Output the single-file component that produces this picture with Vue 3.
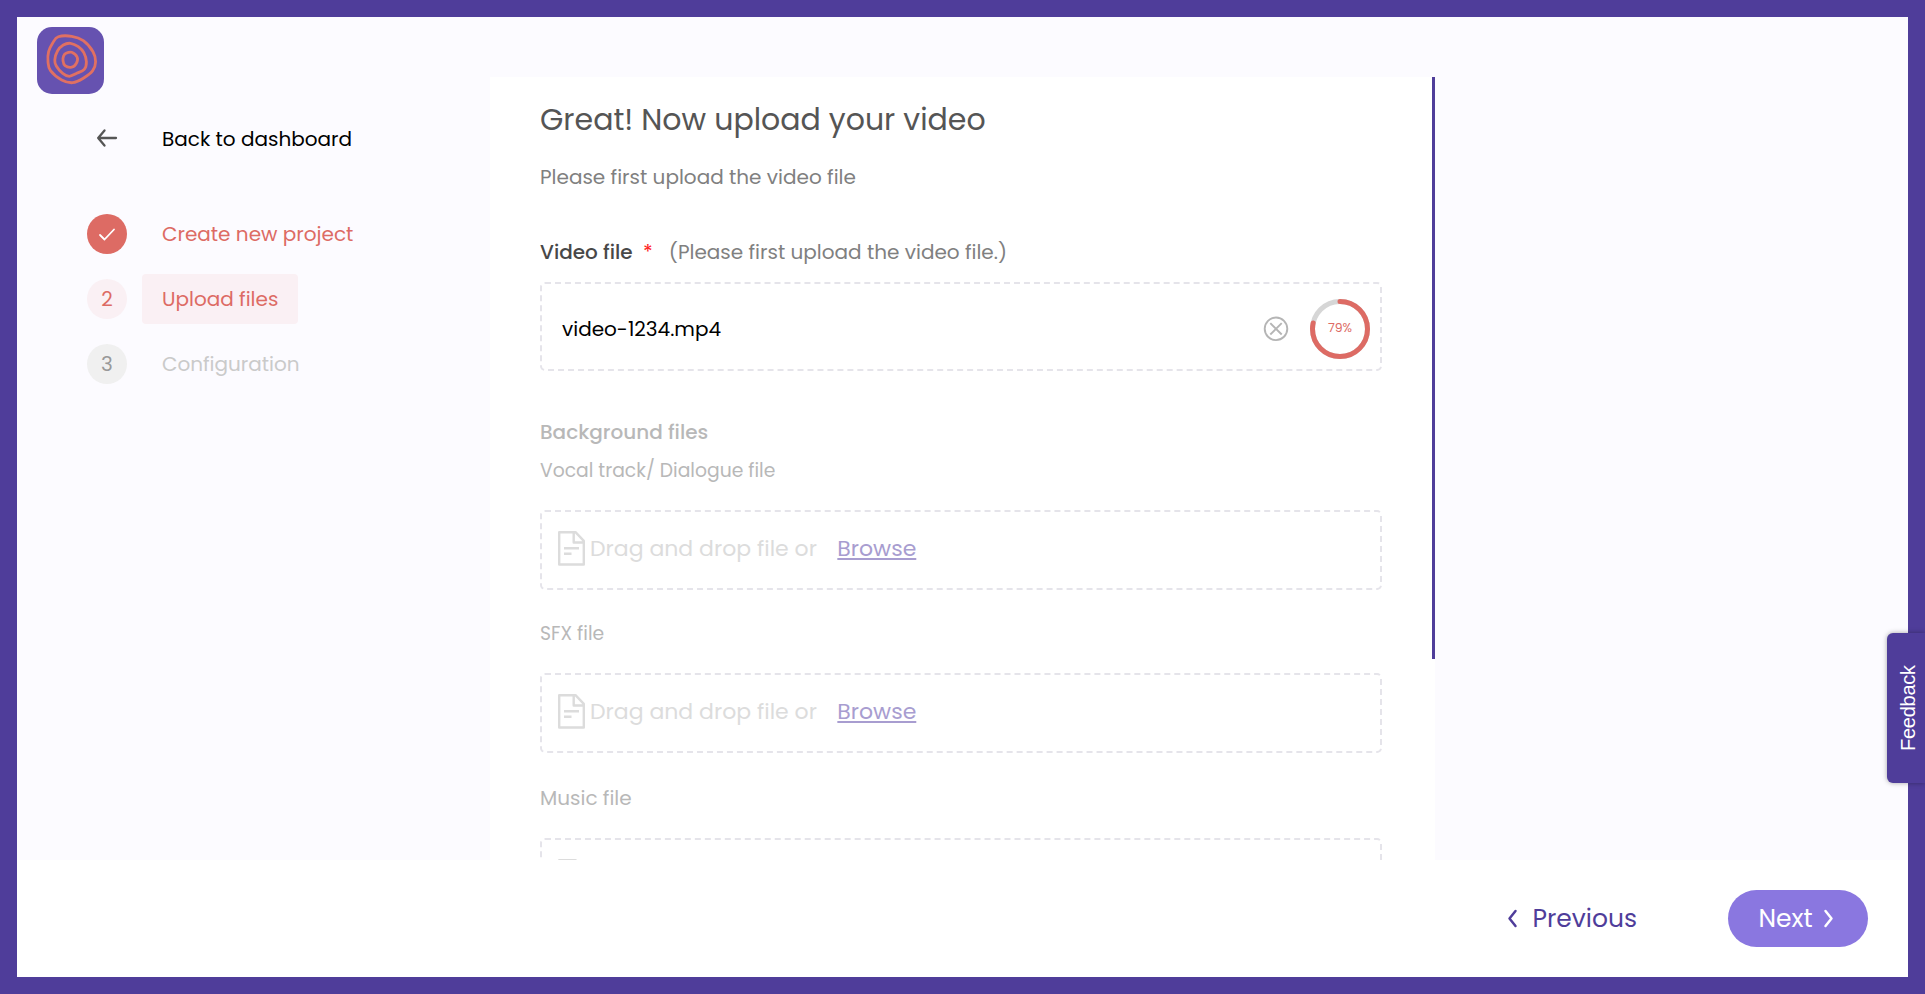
<script setup>
const steps = [
  { label: 'Create new project', state: 'done' },
  { label: 'Upload files', state: 'active' },
  { label: 'Configuration', state: 'idle' },
]
const tracks = [
  { label: 'Vocal track/ Dialogue file', key: 'vocal' },
  { label: 'SFX file', key: 'sfx' },
  { label: 'Music file', key: 'music' },
]
const progress = 79
const circumference = 2 * Math.PI * 27.5

// Closed smooth curve through a list of points (Catmull-Rom as cubic Béziers)
function smooth(p) {
  const n = p.length
  const at = (i) => p[(i + n) % n]
  let d = `M${at(0)}`
  for (let i = 0; i < n; i++) {
    const [a, b, c, e] = [at(i - 1), at(i), at(i + 1), at(i + 2)]
    d += `C${b[0] + (c[0] - a[0]) / 6} ${b[1] + (c[1] - a[1]) / 6} ${c[0] - (e[0] - b[0]) / 6} ${c[1] - (e[1] - b[1]) / 6} ${c[0]} ${c[1]}`
  }
  return d + 'Z'
}
const rings = [
  [[21.3, 9.8], [34.7, 9.3], [46.3, 13.7], [56, 24.7], [58.6, 34.7], [55.7, 43.7], [46.3, 51.3], [35.7, 55.7], [24.7, 53], [13.5, 43.7], [11, 34.7], [11.6, 24.7], [15.7, 16]],
  [[26.3, 18], [33.5, 16.3], [41.3, 19.7], [46.8, 25.7], [49.4, 34.7], [47.3, 42.3], [39.7, 46.3], [32.3, 49.3], [25.7, 46.3], [19.3, 39], [17.8, 32.8], [20.5, 24]],
  [[29, 26.3], [34.7, 25.3], [40.2, 30.3], [39.4, 36.2], [34.7, 40.2], [28, 38.7], [26, 33.7], [26.6, 29]],
].map(smooth)
</script>

<template>
  <div class="app">
    <main class="main">
      <aside class="sidebar">
        <div class="logo">
          <svg width="67" height="67" viewBox="0 0 67 67" fill="none" stroke="#e07062" stroke-width="2.8">
            <path v-for="(d, i) in rings" :key="i" :d="d" />
          </svg>
        </div>
        <div class="back">
          <svg class="arrow" width="22" height="20" viewBox="0 0 22 20" fill="none" stroke="#555" stroke-width="2.3" stroke-linecap="round" stroke-linejoin="round">
            <path d="M20 10H2.200M8.500 2.500L2.200 10L8.500 17.500" />
          </svg>
          <span class="back-text">Back to dashboard</span>
        </div>
        <ul class="steps">
          <li v-for="(s, i) in steps" :key="i" class="step" :class="s.state">
            <span class="dot">
              <svg v-if="s.state === 'done'" width="18" height="14" viewBox="0 0 18 14" fill="none" stroke="#fff" stroke-width="1.8" stroke-linecap="round" stroke-linejoin="round"><path d="M2 8L6.500 12.500L16 2.500" /></svg>
              <template v-else>{{ i + 1 }}</template>
            </span>
            <span class="step-label">{{ s.label }}</span>
          </li>
        </ul>
      </aside>

      <section class="panel">
        <div class="content">
          <h1>Great! Now upload your video</h1>
          <p class="sub">Please first upload the video file</p>
          <div class="label-row"><b>Video file</b><i>*</i><span>(Please first upload the video file.)</span></div>
          <div class="drop uploading">
            <span>video-1234.mp4</span>
            <svg class="cancel" width="26" height="26" viewBox="0 0 26 26" fill="none" stroke="#b5b5b5" stroke-width="1.9"><circle cx="13" cy="12.8" r="11.3" /><path d="M7.300 7.100L18.700 18.500M18.700 7.100L7.300 18.500" /></svg>
            <svg class="ring" width="60" height="60" viewBox="0 0 60 60" fill="none" stroke-width="5">
              <circle cx="30" cy="30" r="27.5" stroke="#d6d6d6" />
              <circle cx="30" cy="30" r="27.5" stroke="#dd6b64" stroke-linecap="round" transform="rotate(-90 30 30)" :stroke-dasharray="`${circumference * progress / 100 - 1} ${circumference}`" />
              <text x="30" y="33" text-anchor="middle">{{ progress }}%</text>
            </svg>
          </div>
          <h2>Background files</h2>
          <div v-for="t in tracks" :key="t.key" class="track" :class="t.key">
            <div class="track-label">{{ t.label }}</div>
            <div class="drop">
              <svg class="file" width="27" height="35" viewBox="0 0 27 35" fill="none" stroke="#dcdcdc" stroke-width="2.4" stroke-linejoin="round"><path d="M1.200 1.200H17.500L25.800 9.800V33.500H1.200ZM15.700 1.500V11.500H25.500M6 17.300H21M6 22.700H13.500" /></svg>
              <template v-if="t.key !== 'music'">
                <span class="drag">Drag and drop file or</span>
                <a class="browse">Browse</a>
              </template>
            </div>
          </div>
        </div>
        <div class="scrollbar"></div>
      </section>
    </main>

    <footer class="footer">
      <button class="prev">
        <svg width="11" height="19" viewBox="0 0 11 19" fill="none" stroke="#4f3d9a" stroke-width="2.5" stroke-linecap="round" stroke-linejoin="round"><path d="M8.500 2L2.500 9.500L8.500 17" /></svg>
        <span>Previous</span>
      </button>
      <button class="next">
        <span>Next</span>
        <svg width="11" height="19" viewBox="0 0 11 19" fill="none" stroke="#fff" stroke-width="2.5" stroke-linecap="round" stroke-linejoin="round"><path d="M2.500 2L8.500 9.500L2.500 17" /></svg>
      </button>
    </footer>
    <div class="feedback">Feedback</div>
  </div>
</template>

<style>
body { overflow: hidden; }
</style>
<style scoped>
.app { position: relative; box-sizing: border-box; height: 994px; border: 17px solid #4f3d9a; background: #fcfbff; display: flex; flex-direction: column; font-family: Poppins, Inter, sans-serif; font-size: 20px; line-height: 30px; color: #000; }
.main { display: flex; height: 843px; overflow: hidden; }
.sidebar { width: 473px; }
.logo { width: 67px; height: 67px; margin: 10px 0 0 20px; background: #6652b0; border-radius: 15px; overflow: hidden; }
.logo svg { display: block; }
.back { display: flex; align-items: center; margin: 30px 0 0 79px; height: 30px; }
.arrow { margin-top: -2px; }
.back-text { margin-left: 44px; }
.steps { list-style: none; margin: 55px 0 0 70px; padding: 0; display: flex; flex-direction: column; gap: 15px; }
.step { display: flex; align-items: center; height: 50px; color: #dd6b64; }
.dot { width: 40px; height: 40px; border-radius: 50%; background: #faf0f4; display: flex; align-items: center; justify-content: center; }
.done .dot { background: #dd6b64; }
.idle .dot { background: #f0f0f0; color: #999; }
.idle { color: #cacaca; }
.step-label { margin-left: 15px; padding: 10px 20px; border-radius: 4px; }
.active .step-label { background: #faf0f4; }
.panel { width: 945px; margin-top: 60px; background: #fff; display: flex; height: 783px; }
.content { width: 842px; padding: 21px 50px 0; }
h1 { margin: 0; font-size: 30px; font-weight: 400; line-height: 43px; color: #555; }
.sub { margin: 21px 0 0; color: #808080; }
.label-row { margin: 45px 0 15px; display: flex; color: #808080; }
.label-row b { font-weight: 500; color: #484848; }
.label-row i { font-style: normal; color: #f22; margin: 0 16px 0 10.5px; }
.drop { box-sizing: border-box; width: 842px; height: 80px; border: 2px dashed #e5e4ea; border-radius: 5px; display: flex; align-items: center; color: #dcdcdc; font-size: 22px; line-height: 31px; }
.uploading { height: 89px; color: #000; font-size: 20px; line-height: 30px; padding: 5px 10px 0 20px; }
.cancel { margin-left: auto; margin-right: 21px; }
.ring text { fill: #dd6b64; font-size: 12.5px; }
h2 { margin: 46px 0 8px; font-size: 20px; font-weight: 500; line-height: 30px; color: #b8b8b8; }
.track { margin-bottom: 28px; }
.track-label { color: #b8b8b8; font-size: 18.75px; line-height: 31px; margin-bottom: 24px; }
.sfx { margin-bottom: 30px; }
.music .track-label { font-size: 20px; line-height: 30px; margin-bottom: 25px; }
.file { margin-left: 16px; margin-top: -3px; }
.drag { margin-left: 5px; margin-top: -3px; }
.browse { margin-left: 20.5px; margin-top: -3px; color: #a89dd0; text-decoration: underline; text-decoration-thickness: 2px; text-underline-offset: 2px; text-decoration-skip-ink: none; }
.scrollbar { width: 3px; height: 582px; background: #4f3d9a; }
.footer { height: 117px; background: #fff; display: flex; align-items: center; justify-content: flex-end; box-sizing: border-box; padding-right: 40px; }
button { font: inherit; font-size: 25px; border: 0; padding: 0; display: flex; align-items: center; }
.prev { background: none; color: #4f3d9a; gap: 14px; margin-right: 91px; }
.next { box-sizing: border-box; width: 140px; height: 57px; border-radius: 29px; background: #8a77e0; color: #fff; padding-left: 30.5px; gap: 10.5px; }
.feedback { position: absolute; right: -17px; top: 616px; box-sizing: border-box; width: 38px; height: 150px; padding-right: 4px; background: #4f3d9a; border-radius: 0 6px 6px 0; box-shadow: 0 0 5px rgba(0, 0, 0, .35); display: flex; align-items: center; justify-content: center; color: #fff; font: 20px "Liberation Sans", Arial, sans-serif; letter-spacing: -.25px; writing-mode: vertical-rl; transform: rotate(180deg); }
</style>
